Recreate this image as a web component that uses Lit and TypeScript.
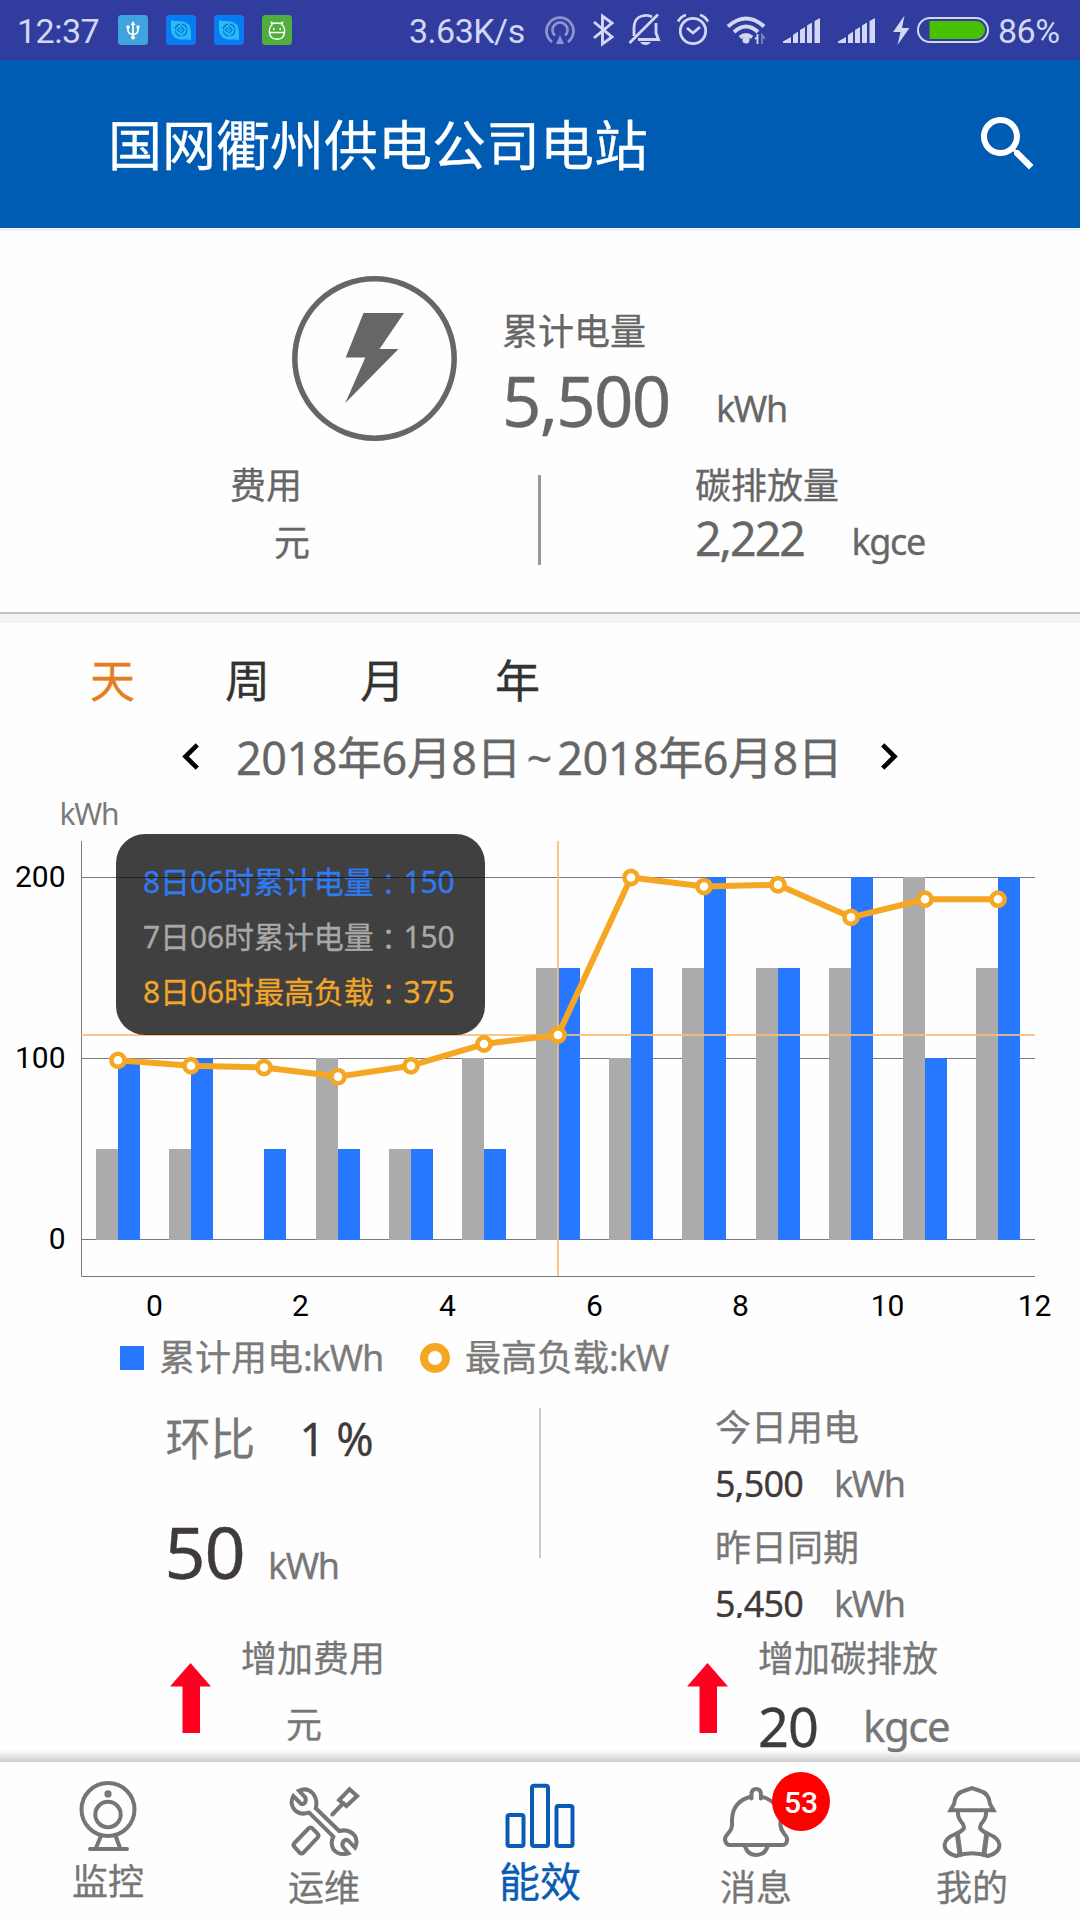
import { LitElement, html, svg, css } from "lit";
import { customElement, property } from "lit/decorators.js";
import { classMap } from "lit/directives/class-map.js";

const PREVIOUS = [50, 50, 0, 100, 50, 100, 150, 100, 150, 150, 150, 200, 150];
const CURRENT = [100, 100, 50, 50, 50, 50, 150, 150, 200, 150, 200, 100, 200];
const LOAD = [99, 96, 95, 90, 96, 108, 113, 200, 195, 196, 178, 188, 188];

const fonts = css`
  :host {
    font-family: "Noto Sans", "Noto Sans CJK SC", sans-serif;
    -webkit-text-stroke: 0.3px currentColor;
  }
`;

@customElement("status-bar")
class StatusBar extends LitElement {
  static styles = css`
    :host {
      display: flex;
      align-items: center;
      height: 60px;
      background: #303d9e;
      color: #d3d7f3;
      font: 34px/60px Roboto, sans-serif;
      letter-spacing: -0.5px;
      white-space: nowrap;
      -webkit-text-stroke: 0;
    }
    .time { width: 101px; padding-left: 17px; }
    .time span, .pct, .speed { position: relative; top: 1px; }
    .apps { display: flex; gap: 18px; }
    .apps svg, .icons svg { display: block; }
    .speed { margin-left: 117px; width: 136px; }
    .pct { margin-left: 8px; }
  `;
  private appIcon() {
    return html`<svg width="30" height="30" viewBox="0 0 30 30">
      <rect width="30" height="30" rx="3.5" fill="#0a7af2" />
      <path d="M5 5l3 1h7q10 1 10 12v7l-4-.5h-6Q5 24 5 14z" fill="#25bdf8" />
      <g fill="none" stroke="#0874d6" stroke-width="1.3">
        <circle cx="15" cy="15" r="5.800" stroke-dasharray="7.600 1.500" />
        <path d="M15 11.500l3.200 3.500-3.200 3.500M13.500 12.500L11.500 15l2 2.500M15 14v2" />
      </g>
    </svg>`;
  }
  private signal() {
    return svg`<path d="M0 25v-1.500l8-4.500v6zM10 25v-8l5-3.500v11.500zM17 25V12l5-3v16zM24 25V7.500l5-3V25zM31.500 25V3L37 0v25z" fill="#d3d7f3"/>`;
  }
  render() {
    return html`
      <div class="time"><span>12:37</span></div>
      <div class="apps">
        <svg width="30" height="30" viewBox="0 0 30 30">
          <rect width="30" height="30" rx="3.5" fill="#3fa4dd" />
          <g fill="none" stroke="#fff" stroke-width="1.7">
            <path d="M15 9v14M10 12v3q0 4 5 4.500 5-.5 5-4.500v-3" />
          </g>
          <path d="M15 6l2.500 4h-5z" fill="#fff" />
          <circle cx="15" cy="22.500" r="2" fill="#fff" />
          <circle cx="10" cy="12" r="1.700" fill="#fff" />
          <rect x="18.500" y="10.500" width="3" height="3" fill="#fff" />
        </svg>
        ${this.appIcon()} ${this.appIcon()}
        <svg width="30" height="30" viewBox="0 0 30 30">
          <rect width="30" height="30" rx="3.5" fill="#4fae3c" />
          <path d="M7.500 17.500Q7 12 10 10L9.500 7.500 11.500 8.500Q15 7.500 18.500 8.500L20.500 7.500 20 10Q23 12 22.500 17.500zM7.500 17.500Q8 24 15 24.300 22 24 22.500 17.500" fill="none" stroke="#fff" stroke-width="1.400" />
          <circle cx="11.800" cy="14" r="1" fill="#fff" />
          <circle cx="18.200" cy="14" r="1" fill="#fff" />
        </svg>
      </div>
      <div class="speed">3.63K/s</div>
      <div class="icons">
        <svg width="445" height="60" viewBox="545 0 445 60">
          <g fill="none" stroke="#8d93d0" stroke-width="2.800">
            <path d="M552 42a13.500 13.500 0 1 1 16 0" />
            <path d="M555 35.500a7.500 7.500 0 1 1 10 0" />
          </g>
          <path d="M560 35l4 9h-8z" fill="#8d93d0" />
          <path d="M594 22l18 15-9.500 7V16l9.500 7-18 15" fill="none" stroke="#d3d7f3" stroke-width="2.900" />
          <g fill="none" stroke="#d3d7f3" stroke-width="2.800">
            <path d="M634 36V28q0-10 8-12 6-1.500 10 1M656 23v10l2.500 6.500H638M629.500 43L658 14.500" />
          </g>
          <path d="M640 42h11q-2 3-5.500 3t-5.500-3z" fill="#d3d7f3" />
          <g fill="none" stroke="#d3d7f3" stroke-width="2.800">
            <circle cx="693" cy="31" r="12.700" />
            <path d="M687 28l6 5 7-6M678 21.500q3-5 8-6.500M708 21.500q-3-5-8-6.500" />
          </g>
          <g fill="none" stroke="#d3d7f3" stroke-width="4">
            <path d="M728 26.500q18-16 36 0M734 32q12-11 24 0M740 37.500q6-5 12 0" />
          </g>
          <circle cx="746" cy="40" r="3.500" fill="#d3d7f3" />
          <path d="M757.500 34v10M755 39l2.500-2" stroke="#d3d7f3" stroke-width="1.800" />
          <path d="M762 44V35l3 4" stroke="#7d84c8" stroke-width="1.800" fill="none" />
          <g transform="translate(783 18)">${this.signal()}</g>
          <g transform="translate(838 18)">${this.signal()}</g>
          <path d="M904.500 15.500L893 32h7.500l-3 13L909.500 28h-7.500z" fill="#d3d7f3" />
          <rect x="918" y="18" width="70" height="24" rx="12" fill="none" stroke="#d3d7f3" stroke-width="2" />
          <path d="M929.500 21H976a9 9 0 0 1 0 18H929.500z" fill="#47c100" />
        </svg>
      </div>
      <div class="pct">86%</div>
    `;
  }
}

@customElement("energy-summary")
class EnergySummary extends LitElement {
  static styles = [
    fonts,
    css`
      :host {
        display: block;
        height: 381px;
        border-top: 3px solid #f3f3f3;
        border-bottom: 2px solid #c4c4c4;
        color: #666;
        font-size: 36px;
        line-height: 48px;
        white-space: nowrap;
      }
      .total { display: flex; height: 186px; padding: 45px 0 0 292px; }
      .text { margin: 32px 0 0 45px; }
      .row { display: flex; align-items: flex-start; }
      .big { margin-top: 4px; width: 214px; font-size: 69px; line-height: 80px; letter-spacing: -1.8px; }
      .unit { letter-spacing: -1.4px; }
      .big + .unit { margin-top: 29px; }
      .parts { display: grid; grid-template-columns: 538px 3px 1fr; }
      .cost { padding-left: 230px; }
      .cost div + div { margin: 9px 0 0 44px; }
      .rule { margin-top: 13px; height: 90px; background: #999; }
      .carbon { padding-left: 154px; }
      .mid { width: 156.5px; margin-top: 4px; font-size: 46.5px; letter-spacing: -2px; }
      .mid + .unit { margin-top: 8px; }
    `,
  ];
  render() {
    return html`
      <div class="total">
        <svg width="165" height="165" viewBox="0 0 165 165">
          <circle cx="82.500" cy="82.500" r="79.700" fill="none" stroke="#666" stroke-width="5.500" />
          <path d="M71.500 37H112L87.500 73h19L53.300 127 73.300 81.500H53.700z" fill="#666" />
        </svg>
        <div class="text">
          <div>累计电量</div>
          <div class="row"><div class="big">5,500</div><div class="unit">kWh</div></div>
        </div>
      </div>
      <div class="parts">
        <div class="cost"><div>费用</div><div>元</div></div>
        <div class="rule"></div>
        <div class="carbon">
          <div>碳排放量</div>
          <div class="row"><div class="mid">2,222</div><div class="unit">kgce</div></div>
        </div>
      </div>
    `;
  }
}

@customElement("energy-chart")
class EnergyChart extends LitElement {
  static styles = [
    fonts,
    css`
      :host { display: block; position: relative; height: 536px; }
      svg { display: block; -webkit-text-stroke: 0; }
      .axis { font: 30px Roboto, sans-serif; fill: #000; }
      .unit { font-size: 30px; letter-spacing: -1.2px; fill: #7a7a7a; }
      .tip {
        position: absolute;
        left: 116px;
        top: 45px;
        width: 369px;
        height: 201px;
        box-sizing: border-box;
        padding: 20px 0 0 27px;
        border-radius: 29px;
        background: rgba(0, 0, 0, 0.75);
        font-size: 30px;
        line-height: 55px;
        letter-spacing: -0.1px;
        white-space: nowrap;
      }
      .tip::after {
        content: "";
        position: absolute;
        left: 0;
        right: 0;
        top: 43px;
        height: 1px;
        background: #222;
      }
      .colon {
        position: relative;
        top: 2px;
        font-family: "Noto Sans CJK TC", sans-serif;
        line-height: 1;
        -webkit-text-stroke: 0;
      }
      .now { color: #2f7bf5; }
      .past { color: #a8a8a8; }
      .load { color: #f2a629; }
    `,
  ];
  private x(i: number) { return Math.floor(81.5 + 73.35 * (i + 0.5)); }
  private y(v: number) { return 450.5 - v * 1.81; }
  private bar(x: number, v: number, fill: string) {
    const top = Math.round(this.y(v) - 0.5);
    return v ? svg`<rect x=${x} y=${top} width="22" height=${451 - top} fill=${fill}/>` : null;
  }
  render() {
    const sel = 6;
    return html`
      <svg width="1080" height="536" viewBox="0 0 1080 536">
        <text class="unit" x="59.500" y="36">kWh</text>
        ${[200, 100, 0].map((v) => svg`
          <path d="M81 ${this.y(v)}H1035" stroke="#7a7a7e"/>
          <text class="axis" x="65.500" y=${this.y(v) + 9} text-anchor="end">${v}</text>`)}
        <path d="M81.500 52V487.500H1035" fill="none" stroke="#7a7a7e" />
        ${CURRENT.map((v, i) => svg`${this.bar(this.x(i) - 22, PREVIOUS[i], "#ababab")}${this.bar(this.x(i), v, "#2878ff")}`)}
        <path d="M${this.x(sel)} 52V487M81 ${Math.round(this.y(LOAD[sel]))}H1035" stroke="#f8bd78" stroke-opacity=".85" stroke-width="2" />
        <polyline points=${LOAD.map((v, i) => `${this.x(i)},${this.y(v)}`).join(" ")} fill="none" stroke="#f5a623" stroke-width="6" stroke-linejoin="round" />
        ${LOAD.map((v, i) => svg`<circle cx=${this.x(i)} cy=${this.y(v)} r="6.600" fill="#fff" stroke="#f5a623" stroke-width="4.600"/>`)}
        ${[0, 2, 4, 6, 8, 10, 12].map((h) => svg`<text class="axis" x=${this.x(h) + 36.5} y="527" text-anchor="middle">${h}</text>`)}
      </svg>
      <div class="tip">
        <div class="now">8日06时累计电量<span class="colon">：</span>150</div>
        <div class="past">7日06时累计电量<span class="colon">：</span>150</div>
        <div class="load">8日06时最高负载<span class="colon">：</span>375</div>
      </div>
    `;
  }
}

@customElement("energy-stats")
class EnergyStats extends LitElement {
  static styles = [
    fonts,
    css`
      :host {
        display: block;
        color: #777;
        font-size: 36px;
        line-height: 48px;
        white-space: nowrap;
      }
      .compare { display: grid; grid-template-columns: 539px 2px 1fr; height: 253px; }
      .left { padding: 27px 0 0 165.5px; }
      .row { display: flex; align-items: flex-start; }
      .ratio { font-size: 45px; line-height: 60px; letter-spacing: -0.3px; }
      .ratio span { width: 134px; }
      .dark { color: #403a3b; }
      .delta { margin-top: 42px; }
      .big { width: 103.5px; font-size: 72px; line-height: 80px; letter-spacing: -1.3px; margin-left: -1px; }
      .big + .unit { margin-top: 31px; }
      .unit { letter-spacing: -1.5px; }
      .rule { margin-top: 26px; height: 150px; background: #ccc; }
      .right { padding: 22px 0 0 174px; }
      .value { margin: 8px 0 16px; }
      .value .dark { width: 119px; letter-spacing: -0.8px; }
      .clip { clip-path: inset(0 0 10px 0); }
      .growth { display: grid; grid-template-columns: 517px 1fr; height: 127px; }
      .item { display: flex; padding-left: 169.5px; }
      .item svg { margin: 28px 30.5px 0 0; }
      .yuan { margin: 18px 0 0 45px; }
      .mid { width: 105px; margin-top: 13px; font-size: 54px; line-height: 60px; letter-spacing: -1px; }
      .mid + .unit { margin-top: 13px; font-size: 42px; line-height: 60px; }
    `,
  ];
  private arrow() {
    return html`<svg width="41" height="70" viewBox="0 0 41 70">
      <path d="M20.500 0L41 23.500H30V70H12.500V23.500H0z" fill="#ff0020" />
    </svg>`;
  }
  render() {
    return html`
      <div class="compare">
        <div class="left">
          <div class="row ratio"><span>环比</span><div class="dark">1 %</div></div>
          <div class="row delta"><div class="big dark">50</div><div class="unit">kWh</div></div>
        </div>
        <div class="rule"></div>
        <div class="right">
          <div>今日用电</div>
          <div class="row value"><div class="dark">5,500</div><div class="unit">kWh</div></div>
          <div>昨日同期</div>
          <div class="row value clip"><div class="dark">5,450</div><div class="unit">kWh</div></div>
        </div>
      </div>
      <div class="growth">
        <div class="item">${this.arrow()}<div><div>增加费用</div><div class="yuan">元</div></div></div>
        <div class="item">
          ${this.arrow()}
          <div>
            <div>增加碳排放</div>
            <div class="row"><div class="mid dark">20</div><div class="unit">kgce</div></div>
          </div>
        </div>
      </div>
    `;
  }
}

const ICONS = {
  camera: svg`<circle cx="42" cy="33.500" r="26.500"/><circle cx="42" cy="38.500" r="12.700"/><circle cx="42" cy="17.900" r="1.600"/>
    <path d="M34.500 61L30 72M50 61l4 11M24 73H61"/>`,
  tools: svg`<path d="M16.900 14.700L23 21q1.500 2 .1 5.500-2 2.500-4.500 1L11.400 20Q8 26 11 31.500 16 40 27.200 36.700L51.300 60.700Q48 67 51.500 73.500 57 80 66.300 77.300L61 71q-1.500-3 .7-6 2-2 4.500-.5L73 71.700Q76 66 73 60 67 52.500 57.200 55L33.800 32.300Q36 24 31 17.500 25 11 16.900 14.700z"/>
    <path d="M50.300 38.500L61.500 27M57.200 24L67.500 13.300 75.100 20 64.400 30z"/>
    <path d="M26.500 52.500q2-2 4 0l5 5.200q2 2 0 4L21.500 76.500q-2 2-4 0l-5-5.500q-2-2 0-4z"/>`,
  chart: svg`<rect x="9.500" y="39" width="16" height="31" rx="2"/><rect x="34" y="9.700" width="16" height="60.300" rx="2"/><rect x="58.500" y="30" width="16" height="40" rx="2"/>`,
  bell: svg`<path d="M37.500 22.500V17.500q.5-4.500 4.700-4.500t4.700 4.500V22.500M37.500 20.500Q19 25 18 43v6q0 4-4 8.500-3.500 4-3 6.500Q12 69 16 69H68.500q4 0 4.700-5 0-3-3.200-6.500-3.500-4.500-3.500-8.500V43Q65 25 46.900 20.500"/>
    <path d="M31 70.500Q34 79 42.300 79T53.600 70.500"/>`,
  worker: svg`<path d="M20.500 34.200H63.500L60 28Q59 17 49 14.500L42 12 35 14.500Q25 17 24 28z"/>
    <path d="M28 35.500Q27.500 41 31 45.500 35 50 33.500 53 30 56.500 25.500 58 15 62 14.500 69.500 15 77 26 80 42 74.500 58 80 69 77 69.500 69.500 69 62 58.500 58 54 56.500 50.500 53 49 50 53 45.500 56.500 41 56 35.500"/>
    <path d="M27.500 59L30 78M56.500 59L54 78" stroke-width="5"/>`,
};

@customElement("nav-tab")
class NavTab extends LitElement {
  static styles = [
    fonts,
    css`
      :host { display: block; flex: 1; }
      .tab {
        display: flex;
        flex-direction: column;
        align-items: center;
        padding-top: 14px;
        color: #767676;
        font-size: 36px;
        line-height: 42px;
      }
      .icon { position: relative; width: 84px; height: 84px; margin-bottom: 7px; }
      .raised .icon { margin-bottom: 1px; }
      .active { color: #0a5bb3; font-size: 41px; }
      .active .icon { margin-bottom: 0; }
      .badge {
        position: absolute;
        left: 58px;
        top: -4px;
        width: 58px;
        height: 59px;
        border-radius: 50%;
        background: #f00;
        color: #fff;
        font: 500 30px/61px Roboto, sans-serif;
        text-align: center;
        -webkit-text-stroke: 0;
      }
    `,
  ];
  @property() icon: keyof typeof ICONS = "camera";
  @property() label = "";
  @property() badge = "";
  @property({ type: Boolean }) active = false;
  render() {
    return html`<div class=${classMap({ tab: true, active: this.active, raised: this.icon === "camera" })}>
      <div class="icon">
        <svg width="84" height="84" viewBox="0 0 84 84" fill="none" stroke="currentColor" stroke-width="4" stroke-linecap="round">${ICONS[this.icon]}</svg>
        ${this.badge ? html`<div class="badge">${this.badge}</div>` : null}
      </div>
      <div>${this.label}</div>
    </div>`;
  }
}

@customElement("app-root")
class AppRoot extends LitElement {
  static styles = [
    fonts,
    css`
      :host {
        display: flex;
        flex-direction: column;
        width: 1080px;
        height: 1920px;
        overflow: hidden;
        background: #fefefe;
        white-space: nowrap;
      }
      header {
        display: flex;
        align-items: center;
        justify-content: space-between;
        height: 168px;
        padding: 0 36px 0 108px;
        background: #005bb3;
        color: #fff;
        font-size: 54px;
        line-height: 72px;
      }
      h1 { margin: 2px 0 0; font: inherit; }
      header svg { display: block; }
      main { flex: 1; border-top: 9px solid #f3f3f3; }
      .tabs {
        display: flex;
        gap: 90px;
        padding: 28px 0 0 90px;
        color: #333;
        font-size: 45px;
        line-height: 60px;
      }
      .on { color: #e67d1e; }
      .date {
        display: flex;
        align-items: center;
        margin: 17px 0 1px;
        padding-left: 182px;
        color: #666;
        font-size: 45px;
        line-height: 60px;
        letter-spacing: -0.5px;
      }
      .date svg { margin-bottom: 4px; }
      .range { width: 645px; margin-left: 37px; }
      .tilde { margin: 0 5.5px; }
      .legend {
        display: flex;
        align-items: center;
        margin-top: 8px;
        padding-left: 120px;
        color: #7b7b7b;
        font-size: 36px;
        line-height: 48px;
      }
      .legend .words { margin-top: 1px; }
      .box { width: 24px; height: 24px; background: #2878ff; margin-right: 15px; }
      .ring { box-sizing: border-box; width: 30px; height: 30px; border: 8px solid #f5a623; border-radius: 50%; margin-right: 15px; }
      .first { width: 261px; }
      .lat { letter-spacing: -1.1px; }
      nav { position: relative; display: flex; height: 158px; background: #fefefe; }
      nav::before {
        content: "";
        position: absolute;
        left: 0;
        right: 0;
        top: -12px;
        height: 12px;
        background: linear-gradient(rgba(0, 0, 0, 0), rgba(0, 0, 0, 0.19));
      }
    `,
  ];
  render() {
    return html`
      <status-bar></status-bar>
      <header>
        <h1>国网衢州供电公司电站</h1>
        <svg width="72" height="72" viewBox="0 0 24 24">
          <path fill="#fff" d="M15.500 14h-.79l-.28-.27C15.410 12.590 16 11.110 16 9.500 16 5.910 13.090 3 9.500 3S3 5.910 3 9.500 5.910 16 9.500 16c1.610 0 3.090-.59 4.230-1.570l.27.28v.79l5 4.990L20.490 19l-4.990-5zm-6 0C7.010 14 5 11.990 5 9.500S7.010 5 9.500 5 14 7.010 14 9.500 11.990 14 9.500 14z" />
        </svg>
      </header>
      <energy-summary></energy-summary>
      <main>
        <div class="tabs"><span class="on">天</span><span>周</span><span>月</span><span>年</span></div>
        <div class="date">
          <svg width="17" height="27" viewBox="0 0 17 27"><path d="M15.300 1.800L3.500 13.500 15.300 25.200" fill="none" stroke="#000" stroke-width="4.600" /></svg>
          <div class="range">2018年6月8日<span class="tilde">~</span>2018年6月8日</div>
          <svg width="17" height="27" viewBox="0 0 17 27"><path d="M1.700 1.800L13.500 13.500 1.700 25.200" fill="none" stroke="#000" stroke-width="4.600" /></svg>
        </div>
        <energy-chart></energy-chart>
        <div class="legend">
          <div class="box"></div>
          <div class="words first">累计用电<span class="lat">:kWh</span></div>
          <div class="ring"></div>
          <div class="words">最高负载<span class="lat">:kW</span></div>
        </div>
        <energy-stats></energy-stats>
      </main>
      <nav>
        <nav-tab icon="camera" label="监控"></nav-tab>
        <nav-tab icon="tools" label="运维"></nav-tab>
        <nav-tab icon="chart" label="能效" active></nav-tab>
        <nav-tab icon="bell" label="消息" badge="53"></nav-tab>
        <nav-tab icon="worker" label="我的"></nav-tab>
      </nav>
    `;
  }
}
